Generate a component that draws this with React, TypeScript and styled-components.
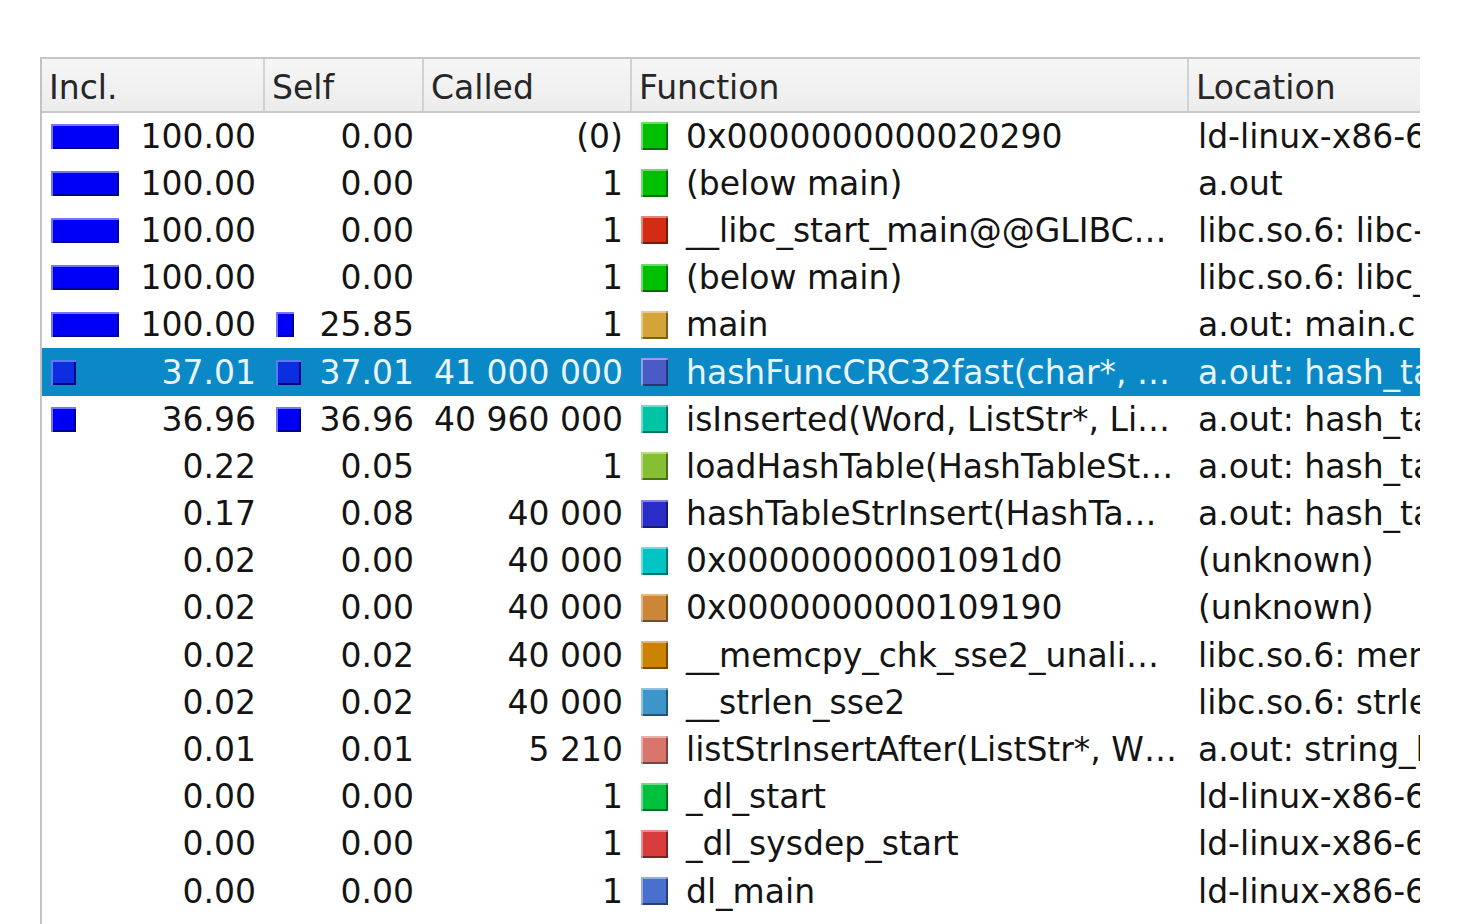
import React from "react";
import styled, { createGlobalStyle } from "styled-components";

const GlobalStyle = createGlobalStyle`
  html, body { margin: 0; padding: 0; background: #ffffff; }
  body { font-family: "DejaVu Sans", "Liberation Sans", sans-serif; }
`;

const COLS = "223px 159px 208px 557px 700px";

const Page = styled.div`
  width: 1462px;
  height: 924px;
  overflow: hidden;
  padding: 57px 0 0 40px;
  box-sizing: border-box;
  background: #ffffff;
`;

const Table = styled.div`
  width: 1380px;
  height: 867px;
  overflow: hidden;
  border-left: 2px solid #c2c2c2;
  border-top: 2px solid #c6c6c6;
  box-sizing: border-box;
  font-size: 33px;
  color: #141414;
`;

const HeaderRow = styled.div`
  display: grid;
  grid-template-columns: ${COLS};
  height: 51.5px;
  background: linear-gradient(#f6f6f6, #ececec);
  border-bottom: 2px solid #cacaca;
`;

const HeaderCell = styled.div`
  display: flex;
  align-items: center;
  padding: 5px 0 0 7px;
  border-right: 2px solid #d2d2d2;
  color: #262626;
  white-space: nowrap;
  overflow: hidden;
  box-sizing: border-box;
`;

const Row = styled.div<{ $selected?: boolean }>`
  display: grid;
  grid-template-columns: ${COLS};
  height: 47.2px;
  align-items: center;
  background: ${(p) => (p.$selected ? "#0b89c7" : "transparent")};
  color: ${(p) => (p.$selected ? "#e9f5fb" : "#141414")};
  white-space: nowrap;
`;

const BarCell = styled.div<{ $padRight: number; $barLeft: number }>`
  display: flex;
  align-items: center;
  height: 100%;
  padding-left: ${(p) => p.$barLeft}px;
  padding-right: ${(p) => p.$padRight}px;
  box-sizing: border-box;
`;

const Bar = styled.div<{ $selected?: boolean }>`
  height: 25px;
  flex: none;
  background: ${(p) => (p.$selected ? "#0a2ee0" : "#0000f6")};
  box-shadow: inset 2px 2px 0 ${(p) => (p.$selected ? "#5d7af0" : "#7474ff")},
    inset -2px -2px 0 #00008a;
  box-sizing: border-box;
`;

const Num = styled.span`
  margin-left: auto;
`;

const CalledCell = styled.div`
  text-align: right;
  padding-right: 9px;
`;

const FuncCell = styled.div`
  display: flex;
  align-items: center;
  padding-left: 9px;
  overflow: hidden;
`;

const Swatch = styled.div<{ $color: string }>`
  width: 27px;
  height: 28px;
  flex: none;
  background: ${(p) => p.$color};
  box-shadow: inset 2px 2px 0 rgba(255, 255, 255, 0.42),
    inset -2px -2px 0 rgba(0, 0, 0, 0.42);
  margin-right: 18px;
`;

const LocCell = styled.div`
  padding-left: 9px;
  overflow: hidden;
`;

type Item = {
  incl: number;
  self: number;
  called: string;
  fn: string;
  color: string;
  loc: string;
  selected?: boolean;
};

const rows: Item[] = [
  { incl: 100, self: 0, called: "(0)", fn: "0x0000000000020290", color: "#00bf00", loc: "ld-linux-x86-64.so.2" },
  { incl: 100, self: 0, called: "1", fn: "(below main)", color: "#00bf00", loc: "a.out" },
  { incl: 100, self: 0, called: "1", fn: "__libc_start_main@@GLIBC…", color: "#d42c12", loc: "libc.so.6: libc-start.c" },
  { incl: 100, self: 0, called: "1", fn: "(below main)", color: "#00bf00", loc: "libc.so.6: libc_start_call_main.h" },
  { incl: 100, self: 25.85, called: "1", fn: "main", color: "#d4a43a", loc: "a.out: main.c" },
  { incl: 37.01, self: 37.01, called: "41 000 000", fn: "hashFuncCRC32fast(char*, …", color: "#4a5bc8", loc: "a.out: hash_table.c", selected: true },
  { incl: 36.96, self: 36.96, called: "40 960 000", fn: "isInserted(Word, ListStr*, Li…", color: "#00c4a4", loc: "a.out: hash_table.c" },
  { incl: 0.22, self: 0.05, called: "1", fn: "loadHashTable(HashTableSt…", color: "#84c032", loc: "a.out: hash_table.c" },
  { incl: 0.17, self: 0.08, called: "40 000", fn: "hashTableStrInsert(HashTa…", color: "#2a2ec8", loc: "a.out: hash_table.c" },
  { incl: 0.02, self: 0, called: "40 000", fn: "0x00000000001091d0", color: "#00c4c4", loc: "(unknown)" },
  { incl: 0.02, self: 0, called: "40 000", fn: "0x0000000000109190", color: "#cc8638", loc: "(unknown)" },
  { incl: 0.02, self: 0.02, called: "40 000", fn: "__memcpy_chk_sse2_unali…", color: "#cc8400", loc: "libc.so.6: memmove-vec-unaligned-erms.S" },
  { incl: 0.02, self: 0.02, called: "40 000", fn: "__strlen_sse2", color: "#3c96cc", loc: "libc.so.6: strlen-sse2.S" },
  { incl: 0.01, self: 0.01, called: "5 210", fn: "listStrInsertAfter(ListStr*, W…", color: "#d8766e", loc: "a.out: string_list.c" },
  { incl: 0, self: 0, called: "1", fn: "_dl_start", color: "#00c03c", loc: "ld-linux-x86-64.so.2" },
  { incl: 0, self: 0, called: "1", fn: "_dl_sysdep_start", color: "#d83c3c", loc: "ld-linux-x86-64.so.2" },
  { incl: 0, self: 0, called: "1", fn: "dl_main", color: "#4870cc", loc: "ld-linux-x86-64.so.2" },
  { incl: 0, self: 0, called: "1", fn: "_dl_catch_exception", color: "#00bf00", loc: "ld-linux-x86-64.so.2" },
];

const FULL = 68;

const barWidth = (pct: number) => Math.round((pct / 100) * FULL);

export default function App() {
  return (
    <>
      <GlobalStyle />
      <Page>
        <Table>
          <HeaderRow>
            <HeaderCell>Incl.</HeaderCell>
            <HeaderCell>Self</HeaderCell>
            <HeaderCell>Called</HeaderCell>
            <HeaderCell>Function</HeaderCell>
            <HeaderCell>Location</HeaderCell>
          </HeaderRow>
          {rows.map((r, i) => (
            <Row key={i} $selected={r.selected}>
              <BarCell $barLeft={9} $padRight={9}>
                {barWidth(r.incl) >= 2 && (
                  <Bar $selected={r.selected} style={{ width: barWidth(r.incl) }} />
                )}
                <Num>{r.incl.toFixed(2)}</Num>
              </BarCell>
              <BarCell $barLeft={11} $padRight={10}>
                {barWidth(r.self) >= 2 && (
                  <Bar $selected={r.selected} style={{ width: barWidth(r.self) }} />
                )}
                <Num>{r.self.toFixed(2)}</Num>
              </BarCell>
              <CalledCell>{r.called}</CalledCell>
              <FuncCell>
                <Swatch $color={r.color} />
                <span>{r.fn}</span>
              </FuncCell>
              <LocCell>{r.loc}</LocCell>
            </Row>
          ))}
        </Table>
      </Page>
    </>
  );
}
